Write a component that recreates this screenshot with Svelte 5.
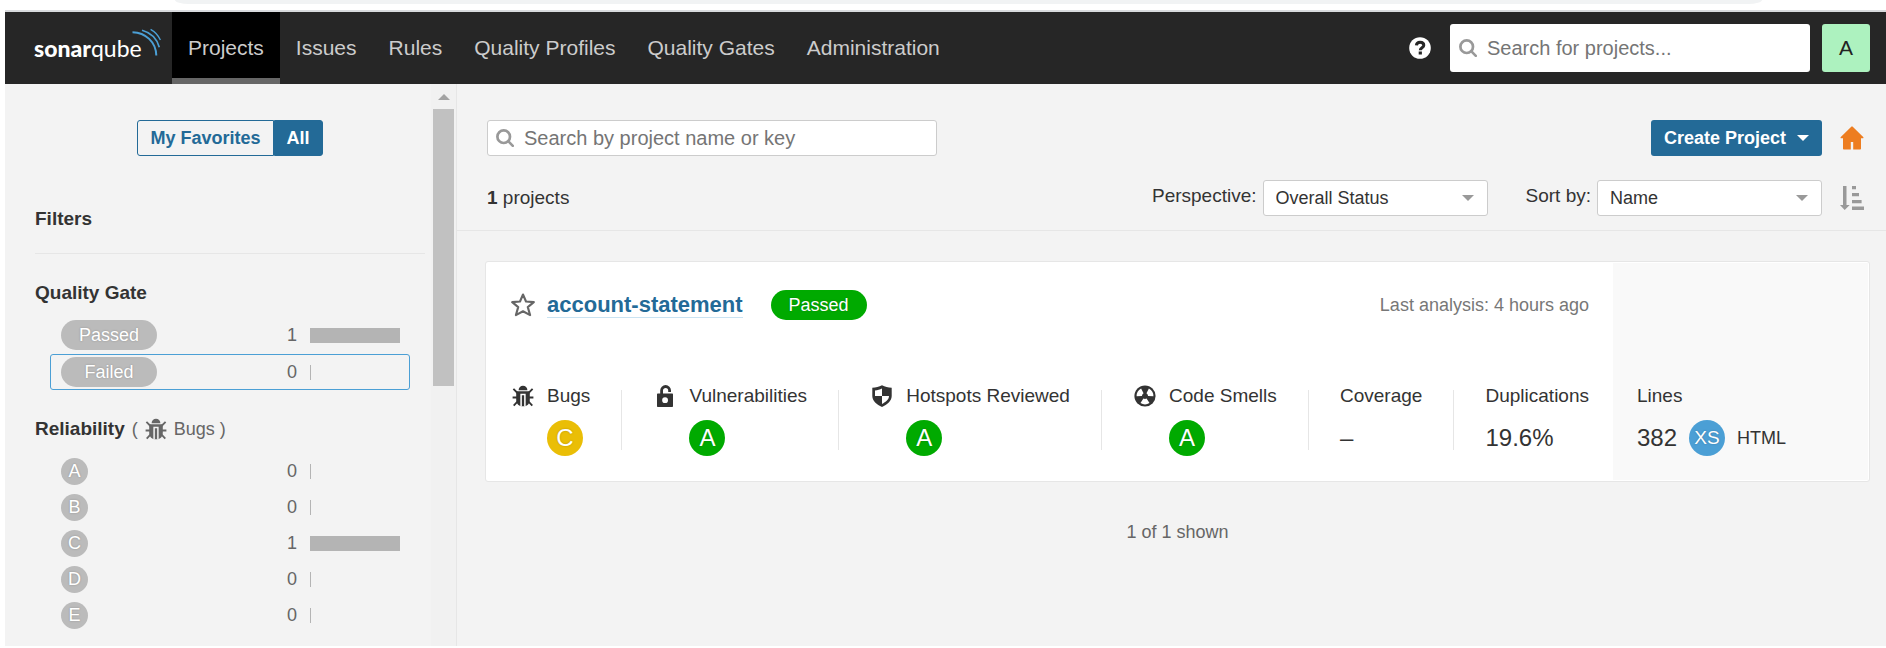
<script>
  const nav = ['Projects', 'Issues', 'Rules', 'Quality Profiles', 'Quality Gates', 'Administration'];
  const gates = [
    { name: 'Passed', count: 1 },
    { name: 'Failed', count: 0, focused: true }
  ];
  const ratings = [
    { name: 'A', count: 0 },
    { name: 'B', count: 0 },
    { name: 'C', count: 1 },
    { name: 'D', count: 0 },
    { name: 'E', count: 0 }
  ];
  const measures = [
    { label: 'Bugs', icon: 'bug', rating: 'C' },
    { label: 'Vulnerabilities', icon: 'lock', rating: 'A' },
    { label: 'Hotspots Reviewed', icon: 'shield', rating: 'A' },
    { label: 'Code Smells', icon: 'smell', rating: 'A' },
    { label: 'Coverage', value: '–' },
    { label: 'Duplications', value: '19.6%' }
  ];
  const bladeAngles = [0, 120, 240];
</script>

{#snippet magnifier()}
  <svg class="magnifier" viewBox="0 0 18 18" aria-hidden="true">
    <circle cx="7.7" cy="7.7" r="6.3" fill="none" stroke="#999" stroke-width="2.7" />
    <path d="M12.2 12.2L16.8 16.8" stroke="#999" stroke-width="2.6" stroke-linecap="round" />
  </svg>
{/snippet}

{#snippet icon(kind)}
  <svg class="icon" viewBox="0 0 24 24" aria-hidden="true">
    {#if kind === 'bug'}
      <path d="M7.6 6.2a4.4 4.4 0 0 1 8.8 0z" fill="currentColor" />
      <path
        d="M5.2 7.300h13.600v8.400c0 3.6-2.2 6-5.1 6.5h-3.400c-2.900-.5-5.100-2.900-5.100-6.5z"
        fill="currentColor"
      />
      <path
        d="M6.5 9L2.4 4.8M17.5 9l4.1-4.2M6.3 13.5H1.600M17.700 13.5h4.700M6.7 17.3l-4 4.4M17.3 17.3l4 4.4"
        fill="none"
        stroke="currentColor"
        stroke-width="1.8"
      />
      <path class="slit" d="M10.100 22.500V10.600h3.800v11.900" fill="none" stroke-width="1.500" />
    {:else if kind === 'lock'}
      <path
        d="M8.600 10.500V6.500a4 4 0 0 1 8 0v1.500"
        fill="none"
        stroke="currentColor"
        stroke-width="2.800"
      />
      <path
        fill-rule="evenodd"
        d="M5 9.400h14c.6 0 1 .4 1 1v11.500c0 .6-.4 1-1 1H5c-.6 0-1-.4-1-1V10.400c0-.6.4-1 1-1zm7 3.900a2.900 2.900 0 1 0 .1 5.800 2.900 2.900 0 0 0 0-5.800z"
        fill="currentColor"
      />
    {:else if kind === 'shield'}
      <path
        fill-rule="evenodd"
        d="M12 1.300C15 3 18 3.600 21.700 3.700V12c0 5-4.500 8.600-9.700 10.900C6.800 20.600 2.300 17 2.300 12V3.700C6 3.600 9 3 12 1.300zM12 4.400C9.900 5.500 7.600 6.200 5 6.400V12h7zM12 12v7.900c3.900-1.900 7-4.500 7-7.900z"
        fill="currentColor"
      />
    {:else}
      <circle cx="12" cy="12" r="10.600" fill="currentColor" />
      <g class="blades">
        {#each bladeAngles as angle}
          <path
            d="M10.400 14.600a3.200 3.200 0 0 0 3.200 0l2.900 4.500a8.500 8.500 0 0 1-9 0z"
            transform="rotate({angle} 12 12)"
          />
        {/each}
      </g>
    {/if}
  </svg>
{/snippet}

{#snippet facet(item, kind)}
  <li>
    <button class="facet" class:focused={item.focused}>
      <span class={kind}>{item.name}</span>
      <span class="count">{item.count}</span>
      <span class="track"><span class="bar" style:width="{item.count * 100}%"></span></span>
    </button>
  </li>
{/snippet}

<div class="browser">
  <div class="omnibox"></div>
</div>

<div class="page">
  <header>
    <a class="logo" href="#home" aria-label="sonarqube">
      <b>sonar</b><span>qube</span>
      <svg viewBox="0 0 29 29" aria-hidden="true">
        <g fill="none" stroke="#4b9fd5">
          <path d="M.5 4.200C13.500 4.500 24 14 24.300 27.500" stroke-width="2" />
          <path d="M10 2.200C18.500 4.500 25 11 27.300 19.200" stroke-width="1.700" />
          <path d="M18.600 1.300C22.800 3.600 26.300 7.200 28.400 12" stroke-width="1.400" />
        </g>
      </svg>
    </a>
    <nav>
      {#each nav as item, i}
        <a href="#nav-{i}" class:active={i === 0}>{item}</a>
      {/each}
    </nav>
    <div class="tools">
      <button class="help" aria-label="Help">
        <svg viewBox="0 0 22 22" aria-hidden="true">
          <circle cx="11" cy="11" r="10.800" fill="#fff" />
          <path
            d="M7.400 8.400C7.600 6.300 9.100 5.200 11.100 5.200c2.200 0 3.700 1.200 3.700 3 0 2.600-3.500 2.500-3.500 5"
            fill="none"
            stroke="#262626"
            stroke-width="3"
          />
          <rect x="9.700" y="14.500" width="3.200" height="3" fill="#262626" />
        </svg>
      </button>
      <label class="search global">
        {@render magnifier()}
        <input type="text" placeholder="Search for projects..." aria-label="Search for projects" />
      </label>
      <button class="avatar">A</button>
    </div>
  </header>

  <div class="body">
    <aside>
      <div class="filters">
        <div class="toggle">
          <button>My Favorites</button><button class="on">All</button>
        </div>
        <h2>Filters</h2>
        <section>
          <h3>Quality Gate</h3>
          <ul class="gates">
            {#each gates as g}{@render facet(g, 'pill')}{/each}
          </ul>
        </section>
        <section>
          <h3>
            Reliability
            <span class="hint">( {@render icon('bug')} Bugs )</span>
          </h3>
          <ul>
            {#each ratings as r}{@render facet(r, 'badge')}{/each}
          </ul>
        </section>
      </div>
      <div class="scrollbar" aria-hidden="true">
        <i></i>
        <div class="thumb"></div>
      </div>
    </aside>

    <main>
      <div class="top">
        <div class="row">
          <label class="search local">
            {@render magnifier()}
            <input
              type="text"
              placeholder="Search by project name or key"
              aria-label="Search by project name or key"
            />
          </label>
          <div class="actions">
            <button class="create">Create Project <i></i></button>
            <button class="plain" aria-label="Homepage">
              <svg viewBox="0 0 24 24" aria-hidden="true">
                <path
                  d="M12 .5c.4 0 .7.100 1 .4l10.200 10.100c.6.600.300 1.300-.5 1.300H21v10.200c0 .7-.4 1.100-1.100 1.100h-6.700V16h-2.400v7.600H4.100c-.7 0-1.100-.4-1.100-1.100V12.300H1.300c-.8 0-1.100-.7-.5-1.300L11 .9c.3-.3.6-.4 1-.4z"
                  fill="#ed7d20"
                />
              </svg>
            </button>
          </div>
        </div>
        <div class="row">
          <p class="total"><b>1</b> projects</p>
          <div class="actions">
            <label for="perspective">Perspective:</label>
            <span class="select">
              <select id="perspective"><option>Overall Status</option></select><i></i>
            </span>
            <label class="sort" for="sort">Sort by:</label>
            <span class="select">
              <select id="sort"><option>Name</option></select><i></i>
            </span>
            <button class="plain" aria-label="Sort direction">
              <svg viewBox="0 0 24 24" aria-hidden="true">
                <path
                  d="M3 0h3.500v19h3.200L4.700 24 0 19h3zM12 0h4v3.200h-4zM12 7h7v3.200h-7zM12 14h9.600v3.200H12zM12 20.500h12v3.500H12z"
                  fill="#999"
                />
              </svg>
            </button>
          </div>
        </div>
      </div>

      <article>
        <div class="info">
          <div class="heading">
            <button class="plain" aria-label="Add to favorites">
              <svg viewBox="0 0 24 24" aria-hidden="true">
                <path
                  d="M12 1.500l3 7 7.800.6-6 5 2.300 8L12 18.300l-7.100 3.800 2.300-8-6-5 7.800-.6z"
                  fill="none"
                  stroke="#666"
                  stroke-width="2.100"
                  stroke-linejoin="round"
                />
              </svg>
            </button>
            <a href="#project">account-statement</a>
            <span class="pill ok">Passed</span>
            <span class="date">Last analysis: 4 hours ago</span>
          </div>
          <div class="measures">
            {#each measures as m, i}
              {#if i > 0}<span class="rule"></span>{/if}
              <div class="measure">
                {#if m.icon}{@render icon(m.icon)}{/if}
                <div>
                  <div class="label">{m.label}</div>
                  <div class="value">
                    {#if m.rating}<span class="circle {m.rating}">{m.rating}</span>{:else}{m.value}{/if}
                  </div>
                </div>
              </div>
            {/each}
          </div>
        </div>
        <div class="size">
          <div class="label">Lines</div>
          <div class="value">382 <span class="circle XS">XS</span> <small>HTML</small></div>
        </div>
      </article>
      <p class="shown">1 of 1 shown</p>
    </main>
  </div>
</div>

<style>
  :global(body) {
    margin: 0;
    background: #fff;
  }
  :global(#app) {
    display: flex;
    flex-direction: column;
    min-height: 100vh;
    box-sizing: border-box;
    padding: 0 0 2px 5px;
    color: #333;
    font: 19px/24px 'Liberation Sans', Arial, sans-serif;
  }
  * {
    box-sizing: border-box;
  }
  button,
  input,
  select {
    margin: 0;
    padding: 0;
    border: 0;
    background: none;
    color: inherit;
    font: inherit;
  }
  a {
    color: inherit;
    text-decoration: none;
  }
  h2,
  h3,
  p,
  ul {
    margin: 0;
    padding: 0;
    list-style: none;
  }
  svg {
    display: block;
    flex: none;
  }
  .browser {
    height: 12px;
    border-bottom: 2px solid #d8dadd;
    padding: 0 124px 0 170px;
  }
  .omnibox {
    height: 4px;
    border-radius: 0 0 14px 14px / 0 0 4px 4px;
    background: #f1f3f4;
  }
  .page {
    flex: 1;
    display: flex;
    flex-direction: column;
    background: #f3f3f3;
  }

  header {
    display: flex;
    height: 72px;
    background: #262626;
    color: #ccc;
    font-size: 21px;
  }
  .logo {
    display: flex;
    align-items: center;
    width: 167px;
    padding-left: 29px;
    color: #fff;
    font: 23px/24px Lato, sans-serif;
  }
  .logo b {
    font-weight: 900;
  }
  .logo svg {
    width: 29px;
    height: 29px;
    margin: 0 0 12px -10px;
  }
  nav {
    display: flex;
  }
  nav a {
    display: flex;
    align-items: center;
    padding: 6px 16px 0;
    border-bottom: 6px solid transparent;
    white-space: nowrap;
  }
  nav a.active {
    background: #000;
    border-color: #666;
  }
  .tools {
    display: flex;
    align-items: center;
    gap: 12px;
    margin-left: auto;
    padding-right: 16px;
  }
  .help {
    margin-right: 7px;
  }
  .help svg {
    width: 22px;
    height: 22px;
  }
  .avatar {
    width: 48px;
    height: 48px;
    border-radius: 3px;
    background: #adf2bf;
    color: #222;
  }
  .search {
    display: flex;
    align-items: center;
    gap: 10px;
    padding: 0 8px;
    border-radius: 3px;
    background: #fff;
    color: #333;
    font-size: 20px;
  }
  .search input {
    flex: 1;
    min-width: 0;
    height: 32px;
    outline: 0;
  }
  .search input::placeholder {
    color: #757575;
  }
  .magnifier {
    width: 18px;
    height: 18px;
  }
  .global {
    width: 360px;
    height: 48px;
    padding: 0 9px;
  }
  .local {
    width: 450px;
    height: 36px;
    border: 1px solid #ccc;
  }

  .body {
    flex: 1;
    display: flex;
  }
  aside {
    display: flex;
    width: 452px;
    border-right: 1px solid #e6e6e6;
  }
  .filters {
    flex: 1;
    padding: 36px 6px 8px 30px;
  }
  .toggle {
    display: flex;
    justify-content: center;
    color: #236a97;
    font-size: 18px;
    font-weight: 700;
  }
  .toggle button {
    height: 36px;
    padding: 0 12px;
    border: 1px solid #236a97;
    border-radius: 3px 0 0 3px;
  }
  .toggle .on {
    border-radius: 0 3px 3px 0;
    background: #236a97;
    color: #fff;
  }
  h2,
  h3 {
    font-size: 19px;
    line-height: 24px;
  }
  h2 {
    margin-top: 51px;
    padding-bottom: 22px;
    border-bottom: 1px solid #e6e6e6;
  }
  h3 {
    display: flex;
    align-items: center;
    gap: 7px;
  }
  .hint {
    display: flex;
    align-items: center;
    gap: 6px;
    color: #666;
    font-size: 18px;
    font-weight: 400;
  }
  .hint .icon {
    --bg: #f3f3f3;
  }
  section {
    margin-top: 27px;
  }
  ul {
    display: flex;
    flex-direction: column;
    padding: 12px 15px 0;
  }
  .gates {
    gap: 1px;
  }
  .facet {
    display: flex;
    align-items: center;
    width: 100%;
    height: 36px;
    padding: 0 9px 0 10px;
    border: 1px solid transparent;
    border-radius: 3px;
    color: #666;
    font-size: 18px;
  }
  .focused {
    border-color: #4b9fd5;
  }
  .pill {
    width: 96px;
    border-radius: 15px;
    background: #bbb;
    color: #fff;
    font-size: 18px;
    line-height: 30px;
    text-align: center;
    text-shadow: 0 0 2px rgba(0, 0, 0, 0.25);
  }
  .pill.ok {
    background: #0a0;
  }
  .badge {
    width: 27px;
    border-radius: 50%;
    background: #bbb;
    color: #fff;
    line-height: 27px;
    text-align: center;
    text-shadow: 0 0 2px rgba(0, 0, 0, 0.25);
  }
  .count {
    margin-left: auto;
  }
  .track {
    width: 90px;
    margin-left: 13px;
  }
  .bar {
    display: block;
    min-width: 1px;
    height: 15px;
    background: #b4b4b4;
  }
  .scrollbar {
    width: 25px;
    padding: 10px 2px 0;
    background: #f1f1f1;
  }
  .scrollbar i {
    display: block;
    width: 0;
    margin: 0 auto 9px;
    border: 6px solid transparent;
    border-top: 0;
    border-bottom-color: #a3a3a3;
  }
  .thumb {
    height: 277px;
    background: #c1c1c1;
  }

  main {
    flex: 1;
    min-width: 0;
  }
  .top {
    display: flex;
    flex-direction: column;
    gap: 24px;
    padding: 36px 22px 14px 30px;
    border-bottom: 1px solid #e6e6e6;
  }
  .row,
  .actions {
    display: flex;
    align-items: center;
  }
  .row {
    justify-content: space-between;
  }
  .create {
    display: flex;
    align-items: center;
    gap: 11px;
    height: 36px;
    padding: 0 13px;
    border-radius: 3px;
    background: #236a97;
    color: #fff;
    font-size: 18px;
    font-weight: 700;
  }
  .create i,
  .select i {
    border: 6px solid transparent;
    border-bottom: 0;
    border-top-color: currentColor;
  }
  .plain svg {
    width: 24px;
    height: 24px;
  }
  .actions .plain {
    margin-left: 18px;
  }
  .actions label {
    margin-right: 6px;
    padding-bottom: 4px;
  }
  .actions .sort {
    margin-left: 38px;
  }
  .select {
    display: grid;
    align-items: center;
    width: 225px;
  }
  .select select,
  .select i {
    grid-area: 1 / 1;
  }
  .select select {
    height: 36px;
    padding: 0 12px;
    border: 1px solid #ccc;
    border-radius: 3px;
    background: #fff;
    appearance: none;
    font-size: 18px;
  }
  .select i {
    justify-self: end;
    margin-right: 14px;
    color: #999;
    pointer-events: none;
  }

  article {
    display: flex;
    margin: 30px 16px 0 28px;
    padding: 1px;
    border: 1px solid #e6e6e6;
    border-radius: 3px;
    background: #fff;
  }
  .info {
    flex: 1;
    padding: 27px 24px 24px;
  }
  .heading {
    display: flex;
    align-items: center;
  }
  .heading a {
    margin: 0 28px 0 12px;
    border-bottom: 1px solid #cae3f2;
    color: #236a97;
    font-size: 22px;
    font-weight: 700;
  }
  .date {
    margin-left: auto;
    color: #777;
    font-size: 18px;
  }
  .measures {
    display: flex;
    justify-content: space-between;
    margin-top: 64px;
  }
  .measure {
    display: flex;
    gap: 12px;
  }
  .icon {
    --bg: #fff;
    width: 24px;
    height: 24px;
  }
  .slit {
    stroke: var(--bg);
  }
  .blades {
    fill: var(--bg);
  }
  .value {
    display: flex;
    align-items: center;
    gap: 12px;
    height: 36px;
    margin-top: 12px;
    font-size: 24px;
  }
  .rule {
    width: 1px;
    height: 60px;
    margin-top: 6px;
    background: #e6e6e6;
  }
  .circle {
    width: 36px;
    border-radius: 50%;
    color: #fff;
    line-height: 36px;
    text-align: center;
    text-shadow: 0 0 2px rgba(0, 0, 0, 0.25);
  }
  .A {
    background: #0a0;
  }
  .C {
    background: #eabe06;
  }
  .XS {
    background: #4b9fd5;
    font-size: 19px;
  }
  .size {
    width: 255px;
    padding: 121px 24px 24px;
    background: #f9f9f9;
  }
  small {
    font-size: 18px;
  }
  .shown {
    margin: 38px 16px 0 28px;
    color: #666;
    font-size: 18px;
    text-align: center;
  }
</style>
